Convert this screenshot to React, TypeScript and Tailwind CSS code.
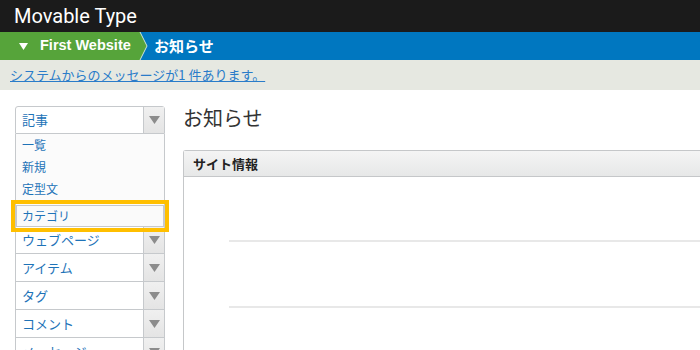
import React from 'react';

const JP = { fontFamily: '"Noto Sans CJK JP", "Noto Sans", sans-serif' };

function Arrow() {
  return (
    <div className="flex w-[21px] shrink-0 items-center justify-center border-l border-[#c6c9cc] bg-gradient-to-b from-[#f0f0f0] to-[#e4e4e4]">
      <svg width="11" height="8" viewBox="0 0 11 8">
        <polygon points="0,0 11,0 5.5,8" fill="#8c8c8c" />
      </svg>
    </div>
  );
}

function MenuRow({ label, h = 'h-[28px]' }: { label: string; h?: string }) {
  return (
    <div className={`flex ${h} border-b border-x border-[#c6c9cc] bg-white`}>
      <div className="flex flex-1 items-center pl-[6px] text-[13px] text-[#1e73b8]">{label}</div>
      <Arrow />
    </div>
  );
}

export default function App() {
  const subItems = ['一覧', '新規', '定型文'];
  return (
    <div className="h-[350px] w-[700px] overflow-hidden bg-white" style={JP}>
      {/* top bar */}
      <div className="flex h-8 items-center bg-[#1b1b1b] pl-[14px] text-[20px] text-white" style={{ fontFamily: 'Roboto, sans-serif' }}>
        Movable Type
      </div>

      {/* breadcrumb */}
      <div className="flex h-7 bg-[#0077c0]">
        <div className="flex w-[139px] items-center bg-[#56a43a] pl-[19px]">
          <svg width="9" height="7" viewBox="0 0 9 7" className="mr-[12px]">
            <polygon points="0,0 9,0 4.5,7" fill="#fff" />
          </svg>
          <span className="text-[14.5px] font-bold text-white" style={{ fontFamily: '"Liberation Sans", Arial, sans-serif' }}>
            First Website
          </span>
        </div>
        <svg width="9" height="28" viewBox="0 0 9 28" className="shrink-0">
          <polygon points="0,0 1,0 8,14 1,28 0,28" fill="#56a43a" />
          <polyline points="1,0 8,14 1,28" fill="none" stroke="#cfe3d8" strokeWidth="1" />
        </svg>
        <div className="flex items-center pl-[6px] text-[15px] font-bold text-white">お知らせ</div>
      </div>

      {/* system message */}
      <div className="flex h-[30px] items-center bg-[#e6e8e1] pl-[10px]">
        <a className="text-[13px] text-[#2a7cc9] underline">システムからのメッセージが1 件あります。</a>
      </div>

      <div className="flex">
        {/* sidebar */}
        <div className="ml-[15px] mt-4 w-[150px] shrink-0">
          <div className="flex h-[28px] rounded-t-[3px] border border-[#c6c9cc] bg-white">
            <div className="flex flex-1 items-center pl-[6px] text-[13px] text-[#1e73b8]">記事</div>
            <Arrow />
          </div>
          <div className="border-x border-[#c6c9cc] bg-[#fbfbfb]">
            {subItems.map((s) => (
              <div key={s} className="flex h-[22px] items-center pl-[6px] text-[12px] text-[#1e73b8]">
                {s}
              </div>
            ))}
            <div className="mt-[5px] flex h-[22px] items-center border border-[#c6c9cc] bg-[#fafafa] pl-[5px] text-[12px] text-[#1e73b8] outline-4 outline-offset-1 outline-[#ffbf00]">
              カテゴリ
            </div>
          </div>
          <MenuRow label="ウェブページ" h="h-[27px]" />
          <MenuRow label="アイテム" />
          <MenuRow label="タグ" />
          <MenuRow label="コメント" />
          <MenuRow label="メッセージ" />
        </div>

        {/* content */}
        <div className="ml-[18px] flex-1">
          <h1 className="mt-[14px] h-7 text-[20px] leading-7 text-[#333]">お知らせ</h1>
          <div className="mt-[18px] h-[220px] rounded-tl-[3px] border-l border-t border-[#c5c7c9]">
            <div className="flex h-[26px] items-center border-b border-[#c5c7c9] bg-gradient-to-b from-[#f4f4f4] to-[#e7e8e8] pl-[9px] text-[13px] font-bold text-[#222]">
              サイト情報
            </div>
            <div className="flex flex-col pl-[45px] pt-[63px]">
              <div className="h-[2px] bg-[#e8e8e8]" />
              <div className="mt-[64px] h-[2px] bg-[#e8e8e8]" />
            </div>
          </div>
        </div>
      </div>
    </div>
  );
}
